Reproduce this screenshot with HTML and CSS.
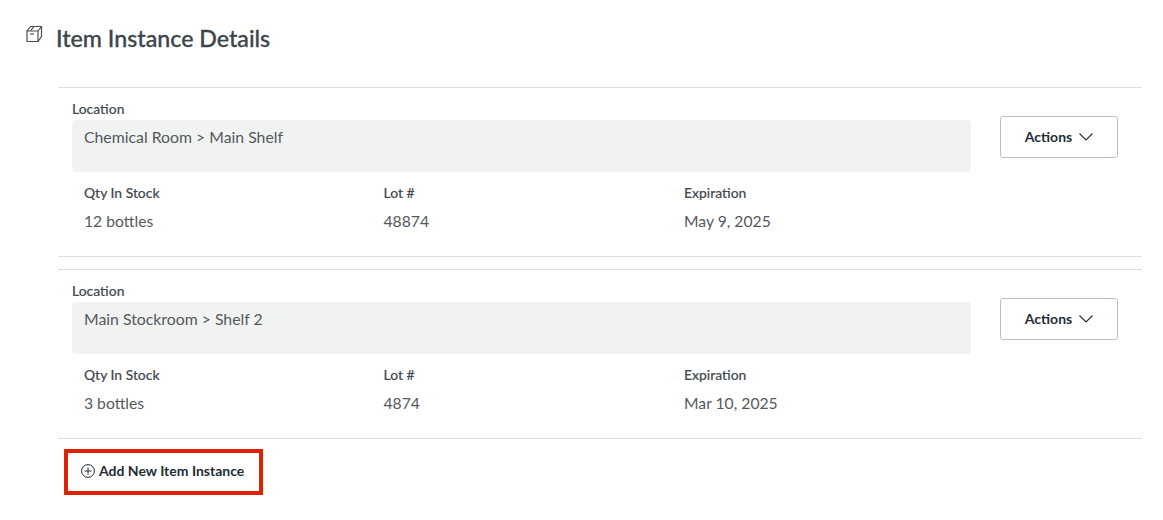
FILE: index.html
```html
<!DOCTYPE html>
<html lang="en">
<head>
<meta charset="utf-8">
<title>Item Instance Details</title>
<link rel="stylesheet" href="styles.css">
</head>
<body>
<header class="title-row">
  <svg class="box-icon" width="18" height="18" viewBox="0 0 18 18" fill="none" stroke="#4a4f55" stroke-width="1.2">
    <path d="M2 6h11v10.500H2z"/>
    <path d="M2 6L5.500 1.500h11V11.500L13 16.500"/>
    <path d="M13 6L16.500 1.500"/>
    <path d="M9 1.500L5.500 6"/>
    <path d="M5 9h4"/>
  </svg>
  <h1 class="title">Item Instance Details</h1>
</header>
<main class="content">
  <section class="instance">
    <div class="top">
      <div class="loc">
        <div class="label">Location</div>
        <div class="loc-box">Chemical Room &gt; Main Shelf</div>
      </div>
      <button class="actions">Actions
        <svg width="14" height="8" viewBox="0 0 14 8" fill="none" stroke="#1f2d36" stroke-width="1.1"><path d="M0.500 0.500L7 7L13.500 0.500"/></svg>
      </button>
    </div>
    <div class="fields">
      <div class="field f1"><div class="label">Qty In Stock</div><div class="value">12 bottles</div></div>
      <div class="field f2"><div class="label">Lot #</div><div class="value">48874</div></div>
      <div class="field"><div class="label">Expiration</div><div class="value">May 9, 2025</div></div>
    </div>
  </section>
  <section class="instance second">
    <div class="top">
      <div class="loc">
        <div class="label">Location</div>
        <div class="loc-box">Main Stockroom &gt; Shelf 2</div>
      </div>
      <button class="actions">Actions
        <svg width="14" height="8" viewBox="0 0 14 8" fill="none" stroke="#1f2d36" stroke-width="1.1"><path d="M0.500 0.500L7 7L13.500 0.500"/></svg>
      </button>
    </div>
    <div class="fields">
      <div class="field f1"><div class="label">Qty In Stock</div><div class="value">3 bottles</div></div>
      <div class="field f2"><div class="label">Lot #</div><div class="value">4874</div></div>
      <div class="field"><div class="label">Expiration</div><div class="value">Mar 10, 2025</div></div>
    </div>
  </section>
  <div class="add-wrap">
    <a class="add">
      <svg width="14" height="14" viewBox="0 0 14 14" fill="none" stroke="#1f2d36" stroke-width="1"><circle cx="7" cy="7" r="6.400"/><path d="M7 3.500v7M3.500 7h7"/></svg>
      Add New Item Instance
    </a>
  </div>
</main>
</body>
</html>
```
FILE: styles.css
```css
* { box-sizing: border-box; }
html, body { margin: 0; padding: 0; background: #fff; }
body {
  width: 1163px;
  height: 520px;
  overflow: hidden;
  font-family: Lato, "Liberation Sans", sans-serif;
  color: #454b50;
}
.title-row {
  display: flex;
  align-items: flex-start;
  height: 30px;
  margin-top: 23px;
  padding-left: 25px;
}
.box-icon { margin-right: 13px; margin-top: 2px; }
.title {
  margin: 0;
  font-size: 23.200px;
  font-weight: 500;
  line-height: 30px;
  color: #3e454b;
  -webkit-text-stroke: 0.3px #3e454b;
}
.content {
  margin: 34px 21px 0 58px;
}
.instance {
  height: 170px;
  border-top: 1px solid #dcdedf;
  border-bottom: 1px solid #dcdedf;
  padding-left: 14px;
}
.second { margin-top: 12px; }
.top {
  display: flex;
  align-items: flex-start;
}
.loc { width: 899px; padding-top: 13px; }
.label {
  font-size: 13.900px;
  font-weight: 500;
  line-height: 16px;
  color: #454b50;
  -webkit-text-stroke: 0.15px #454b50;
}
.loc-box {
  height: 52px;
  margin-top: 3px;
  padding: 7px 12px;
  font-size: 15.800px;
  line-height: 20px;
  background: #f1f3f2;
  border-radius: 4px;
  color: #55595d;
}
.actions {
  display: flex;
  align-items: center;
  justify-content: center;
  gap: 7px;
  width: 118px;
  height: 42px;
  margin: 28px 0 0 29px;
  padding: 0 0 2px;
  background: #fff;
  border: 1px solid #b9c0c5;
  border-radius: 3px;
  font-family: inherit;
  font-size: 14px;
  font-weight: 700;
  color: #1f2d36;
}
.actions svg { margin-top: 2px; }
.fields {
  display: flex;
  margin-top: 13px;
  padding-left: 12px;
}
.field .label { margin-bottom: 10px; }
.f1 { width: 299.500px; }
.f2 { width: 300.500px; }
.value {
  font-size: 15.700px;
  line-height: 20px;
  color: #55595d;
}
.add-wrap { padding: 10px 0 0 6px; }
.add {
  display: flex;
  align-items: center;
  gap: 4px;
  width: 199px;
  height: 46px;
  padding: 0 0 4px 13px;
  border: 4px solid #de2100;
  font-size: 14px;
  font-weight: 700;
  color: #1f2d36;
}
.add svg { margin-top: 2px; }
```
